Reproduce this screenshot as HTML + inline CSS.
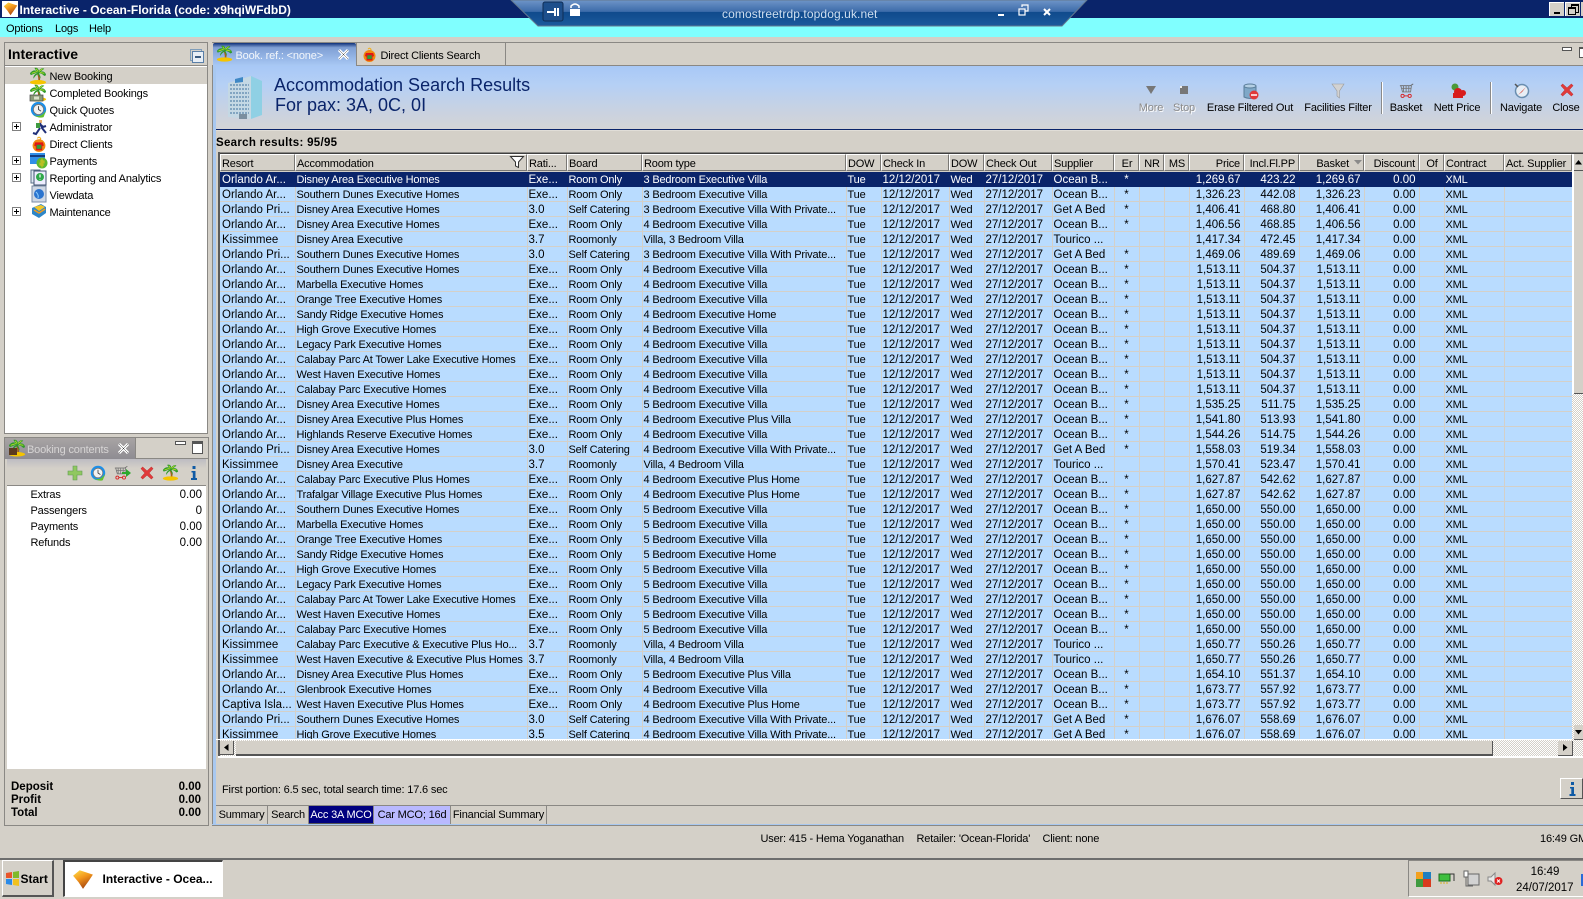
<!DOCTYPE html>
<html><head><meta charset="utf-8"><title>Interactive - Ocean-Florida</title>
<style>
html,body{margin:0;padding:0;background:#d4d0c8}
#p{position:relative;width:1583px;height:899px;overflow:hidden;background:#d4d0c8;font:11px/15px "Liberation Sans",Arial,sans-serif;letter-spacing:-.17px;color:#000}
.a{position:absolute;white-space:nowrap}
svg{position:absolute;overflow:visible}
.b{font-weight:bold;font-size:11.5px;letter-spacing:0}
.n{font-size:11.5px;letter-spacing:0}
.pn{position:absolute;border:1px solid #8a8884;box-sizing:border-box}
table{border-collapse:collapse;table-layout:fixed;position:absolute;left:220px;top:172px;width:1352px;font:11.5px/12px "Liberation Sans",Arial,sans-serif;letter-spacing:0}
td{height:12px;padding:2px 0 0 1px;border-right:1px solid #d4d0c8;border-bottom:1px solid #d4d0c8;background:#b9dcff;white-space:nowrap;overflow:hidden;box-sizing:content-box}
td:nth-child(1){padding-left:2px}
td:nth-child(2),td:nth-child(4),td:nth-child(5),td:nth-child(6),td:nth-child(8),td:nth-child(19){font-size:11px;letter-spacing:-.18px}
tr.s td{background:#0a246a;color:#fff;border-color:#0a246a;border-right-color:#0a246a}
td.r{text-align:right;padding:2px 3px 0 0}
td.c{text-align:center;padding:2px 0 0 0}
.h{position:absolute;top:154px;height:17px;box-sizing:border-box;background:#d4d0c8;border-left:1px solid #fff;border-top:1px solid #fff;border-right:1px solid #7a7874;border-bottom:1px solid #7a7874;padding-left:1px;line-height:18px;white-space:nowrap;overflow:hidden;box-shadow:1px 0 0 #d4d0c8}
.h.r{text-align:right;padding:0 3px 0 0}
.t{position:absolute;text-align:center;line-height:15px;white-space:nowrap;transform:translateX(-50%);top:100.500px}
.g{color:#8b8b8b;text-shadow:1px 1px 0 #fff}
.bt{position:absolute;top:806px;height:18px;line-height:19px;text-align:center;box-sizing:border-box;border-right:1px solid #8a8884;white-space:nowrap}
</style></head><body><div id="p">
<svg width="0" height="0" style="position:absolute"><defs>
<linearGradient id="og" x1="0" y1="0" x2=".5" y2="1"><stop offset="0" stop-color="#ffe04a"/><stop offset=".5" stop-color="#f2961c"/><stop offset="1" stop-color="#a8480f"/></linearGradient>
<symbol id="palm" viewBox="0 0 20 20"><path d="M10 7C11 10 12 13 11 16" stroke="#a0601c" stroke-width="2" fill="none"/><ellipse cx="10" cy="17" rx="9" ry="2.500" fill="#f5c400"/><path d="M10 6L2 9L1 7Q4 3 8 4L6 1Q10 0 11 4Q14 0 17 2L13 5Q18 4 19 9L17 10Q14 7 11 7Q13 10 13 13L10 8Q7 9 5 13Q4 9 10 6Z" fill="#2f9a2a"/><path d="M3 7L9 5M8 2L10 5M15 2L11 5M17 7L12 6" stroke="#b4dc28" fill="none"/></symbol>
<symbol id="sm" viewBox="0 0 20 20"><path d="M1 7L7 2L19 6L15 12L10 19L6 13Z" fill="url(#og)"/></symbol>
<symbol id="clk" viewBox="0 0 20 20"><circle cx="10" cy="10" r="9" fill="#1d8fe8"/><circle cx="10" cy="10" r="6" fill="#f2f2f2" stroke="#777"/><path d="M10 6V10L13 12" stroke="#333" fill="none"/><path d="M4 16Q12 21 19 11L16 19Q10 21 4 16Z" fill="#63c02e"/></symbol>
<symbol id="cli" viewBox="0 0 20 20"><path d="M8 3Q10 0 12 3Q12 5 10 6" stroke="#f2b01e" stroke-width="1.500" fill="none"/><circle cx="10" cy="12" r="8" fill="#f08a10"/><path d="M5 8H15L16 12L14 13V18H6V13L4 12Z" fill="#e01515"/><rect x="7" y="11" width="6" height="5" fill="#2f9a36"/></symbol>
<symbol id="x" viewBox="0 0 16 16"><path d="M3 1L8 5.500L13 1L15 3L10.500 8L15 13L13 15L8 10.500L3 15L1 13L5.500 8L1 3Z" fill="#e03a3a" stroke="#b52a2a" stroke-width=".5"/></symbol>
<symbol id="cart" viewBox="0 0 18 18"><path d="M1 3H13L16 1" stroke="#666" fill="none"/><path d="M2 3L4 10H13L14 3M5 3V10M8 3V10M11 3V10M3 6H14" stroke="#777" fill="none"/><circle cx="4" cy="14.500" r="1.800" fill="none" stroke="#d81c1c"/><circle cx="12" cy="14.500" r="1.800" fill="none" stroke="#d81c1c"/><path d="M6 14.500H10" stroke="#d81c1c"/></symbol>
</defs></svg>

<!-- title bar -->
<div class="a" style="left:0;top:0;width:1583px;height:18px;background:#0a246a"></div>
<div class="a" style="left:2px;top:1px;width:16px;height:16px;background:#fff"></div>
<svg style="left:3px;top:1px" width="15" height="15"><use href="#sm" width="15" height="15"/></svg>
<div class="a b" style="left:19.500px;top:1.500px;color:#fff;font-size:12px;line-height:16px;letter-spacing:0">Interactive - Ocean-Florida (code: x9hqiWFdbD)</div>
<div class="a" style="left:1549px;top:2px;width:15px;height:14px;background:#d4d0c8;border-top:1px solid #fff;border-left:1px solid #fff;box-sizing:border-box"><div class="a" style="left:4px;top:9px;width:6px;height:2px;background:#000"></div></div>
<div class="a" style="left:1565px;top:2px;width:15px;height:14px;background:#d4d0c8;border-top:1px solid #fff;border-left:1px solid #fff;box-sizing:border-box"><div class="a" style="left:5px;top:1px;width:6px;height:6px;border:1px solid #000;border-top-width:2px"></div><div class="a" style="left:2px;top:4px;width:6px;height:5px;border:1px solid #000;border-top-width:2px;background:#d4d0c8"></div></div>
<div class="a" style="left:1581px;top:2px;width:2px;height:14px;background:#d4d0c8"></div>

<!-- menu -->
<div class="a" style="left:0;top:18px;width:1583px;height:19px;background:#80ffff"></div>
<div class="a" style="left:6px;top:21.500px">Options</div>
<div class="a" style="left:55px;top:21.500px">Logs</div>
<div class="a" style="left:89px;top:21.500px">Help</div>

<!-- rdp bar -->
<svg style="left:0;top:0" width="1583" height="30">
<defs><linearGradient id="rd" x1="0" y1="0" x2="0" y2="1"><stop offset="0" stop-color="#6f95c8"/><stop offset=".45" stop-color="#3c6ba9"/><stop offset=".46" stop-color="#0f4a8c"/><stop offset="1" stop-color="#1c5a9c"/></linearGradient></defs>
<path d="M511 0L538 26H1062L1087 0Z" fill="url(#rd)" stroke="#62788f"/>
<rect x="543" y="2" width="20" height="19" rx="2" fill="#1d4f8c" stroke="#0f2d55"/>
<path d="M547 12H555M555 8V16M558 8V16" stroke="#fff" stroke-width="2"/>
<path d="M571 8V6Q575 2 579 6V8" fill="none" stroke="#fff" stroke-width="1.500"/><rect x="570" y="9" width="10" height="7" fill="#fff"/>
<path d="M998 15H1004" stroke="#fff" stroke-width="2"/>
<rect x="1019" y="9" width="6" height="6" fill="none" stroke="#fff" stroke-width="1.200"/><path d="M1022 7V5H1028V11H1025" fill="none" stroke="#fff" stroke-width="1.200"/>
<path d="M1044 9L1050 15M1050 9L1044 15" stroke="#fff" stroke-width="2"/>
</svg>
<div class="a" style="left:722px;top:7px;color:#cfdff0;font-size:12px;letter-spacing:.1px">comostreetrdp.topdog.uk.net</div>

<!-- left panel top -->
<div class="pn" style="left:4px;top:42px;width:204px;height:392px;background:#fff;border-top:1px solid #8a8884"></div>
<div class="a" style="left:5px;top:43px;width:202px;height:22px;background:#d4d0c8;border-bottom:1px solid #8a8884"></div>
<div class="a b" style="left:8px;top:46px;font-size:14px;line-height:17px">Interactive</div>
<div class="a" style="left:190px;top:49px;width:10px;height:10px;border:1px solid #7f9db9;background:#d4d0c8"></div>
<div class="a" style="left:192px;top:51px;width:10px;height:10px;border:1px solid #5a7fa8;background:#e8eef5"><div class="a" style="left:2px;top:4px;width:6px;height:2px;background:#3a5a80"></div></div>
<div class="a" style="left:5px;top:67px;width:202px;height:17px;background:#d4d0c8"></div>
<svg style="left:29px;top:67px" width="18" height="18"><use href="#palm" width="18" height="18"/></svg>
<div class="a" style="left:49.500px;top:70px">New Booking</div>
<svg style="left:29px;top:84px" width="18" height="18"><use href="#palm" width="18" height="18"/><rect x="1" y="11" width="13" height="6" fill="#8a9a78" stroke="#444" stroke-width=".7"/><rect x="5" y="12.500" width="5" height="3" fill="#d8e0c8"/></svg>
<div class="a" style="left:49.500px;top:87px">Completed Bookings</div>
<svg style="left:30px;top:101px" width="17" height="17"><use href="#clk" width="17" height="17"/></svg>
<div class="a" style="left:49.500px;top:104px">Quick Quotes</div>
<svg style="left:32px;top:119px" width="15" height="16"><path d="M7 1h3v3h-3z" fill="#e8b070"/><path d="M8 4L10 9L14 14M8 5L11 8L14 7M8 9L4 15L1 14" stroke="#1f2f78" stroke-width="2" fill="none"/><rect x="4" y="4" width="4" height="5" fill="#3f9a3f"/></svg>
<div class="a" style="left:49.500px;top:121px">Administrator</div>
<svg style="left:31px;top:135px" width="16" height="18"><use href="#cli" width="16" height="18"/></svg>
<div class="a" style="left:49.500px;top:138px">Direct Clients</div>
<svg style="left:30px;top:152px" width="17" height="17"><rect x="0" y="1" width="15" height="11" fill="#2f8fe8"/><rect x="0" y="3" width="15" height="2" fill="#123c80"/><circle cx="12" cy="11" r="5.500" fill="#5fb82f"/><path d="M12 6.500V15.500M10 9H14V11H10V13H14" stroke="#d8c01e" fill="none"/></svg>
<div class="a" style="left:49.500px;top:155px">Payments</div>
<svg style="left:31px;top:169px" width="16" height="17"><rect x="0" y="1" width="9" height="13" fill="#dfe9f3" stroke="#5a6f8a"/><rect x="3" y="2" width="12" height="14" fill="#eef" stroke="#3f5370"/><circle cx="9" cy="8" r="4" fill="#2fa84b"/><path d="M9 5.500V8.500M9 10V10.500" stroke="#fff" stroke-width="1.200"/></svg>
<div class="a" style="left:49.500px;top:172px">Reporting and Analytics</div>
<svg style="left:31px;top:186px" width="16" height="17"><rect x="1" y="0" width="14" height="16" fill="#cfd8e5" stroke="#7b8ba5"/><circle cx="8" cy="8" r="5" fill="#2b74cf"/><path d="M5 6Q8 9 7 12" stroke="#8fd0ff" fill="none"/></svg>
<div class="a" style="left:49.500px;top:189px">Viewdata</div>
<svg style="left:31px;top:203px" width="16" height="17"><path d="M1 5L10 1L15 4V10L8 15L1 11Z" fill="#2e86c8"/><path d="M3 4L10 2L14 4L8 8Z" fill="#f2c62a"/><path d="M3 7L8 10L14 6" stroke="#f29a1c" fill="none" stroke-width="1.500"/></svg>
<div class="a" style="left:49.500px;top:206px">Maintenance</div>
<svg style="left:12px;top:122px" width="9" height="9"><rect x=".5" y=".5" width="8" height="8" fill="#fff" stroke="#808080"/><path d="M2 4.500H7M4.500 2V7" stroke="#000"/></svg>
<svg style="left:12px;top:156px" width="9" height="9"><rect x=".5" y=".5" width="8" height="8" fill="#fff" stroke="#808080"/><path d="M2 4.500H7M4.500 2V7" stroke="#000"/></svg>
<svg style="left:12px;top:173px" width="9" height="9"><rect x=".5" y=".5" width="8" height="8" fill="#fff" stroke="#808080"/><path d="M2 4.500H7M4.500 2V7" stroke="#000"/></svg>
<svg style="left:12px;top:207px" width="9" height="9"><rect x=".5" y=".5" width="8" height="8" fill="#fff" stroke="#808080"/><path d="M2 4.500H7M4.500 2V7" stroke="#000"/></svg>

<!-- left panel bottom -->
<div class="pn" style="left:4px;top:437px;width:205px;height:389px;background:#d4d0c8"></div>
<div class="a" style="left:5px;top:438px;width:130px;height:21px;background:linear-gradient(#a8a4a4,#8e8c92);border-right:1px solid #8a8884"></div>
<div class="a" style="left:135px;top:458px;width:73px;height:1px;background:#8a8884"></div>
<svg style="left:8px;top:439px" width="18" height="18"><use href="#palm" width="18" height="18"/><rect x="1" y="9" width="8" height="7" fill="#5b3a1f"/></svg>
<div class="a" style="left:27px;top:443px;color:#d6d4d4">Booking contents</div>
<svg style="left:118px;top:443px" width="11" height="11"><path d="M1 1L10 10M10 1L1 10" stroke="#fff" stroke-width="3"/><path d="M1 1L10 10M10 1L1 10" stroke="#333" stroke-width=".5"/></svg>
<div class="a" style="left:175px;top:441px;width:9px;height:2px;border:1px solid #555;background:#fff"></div>
<div class="a" style="left:192px;top:441px;width:9px;height:9px;border:1px solid #555;border-top-width:3px;background:#fff"></div>
<div class="a" style="left:7px;top:459px;width:199px;height:26px;background:linear-gradient(#bdbcc2,#d4d0c8 35%);border-bottom:1px solid #8a8884"></div>
<svg style="left:68px;top:466px" width="14" height="14"><path d="M5 0H9V5H14V9H9V14H5V9H0V5H5Z" fill="#90c860" stroke="#5f9a55" stroke-width=".6"/></svg>
<svg style="left:90px;top:465px" width="16" height="16"><use href="#clk" width="16" height="16"/></svg>
<svg style="left:114px;top:465px" width="17" height="16"><use href="#cart" width="15" height="16"/><path d="M8 7H12V4L17 8L12 12V9H8Z" fill="#2ca82c"/></svg>
<svg style="left:140px;top:466px" width="14" height="14"><use href="#x" width="14" height="14"/></svg>
<svg style="left:162px;top:464px" width="17" height="17"><use href="#palm" width="17" height="17"/></svg>
<svg style="left:190px;top:466px" width="8" height="14"><rect x="2.500" y="0" width="3" height="3" fill="#0f5aa5"/><path d="M1.500 5H5.500V12H7V14H1V12H2.800V6.500H1.500Z" fill="#0f5aa5"/></svg>
<div class="a" style="left:7px;top:486px;width:199px;height:283px;background:#fff"></div>
<div class="a" style="left:30.500px;top:488px">Extras</div><div class="a n" style="right:1381px;top:488px">0.00</div>
<div class="a" style="left:30.500px;top:504px">Passengers</div><div class="a n" style="right:1381px;top:504px">0</div>
<div class="a" style="left:30.500px;top:520px">Payments</div><div class="a n" style="right:1381px;top:520px">0.00</div>
<div class="a" style="left:30.500px;top:536px">Refunds</div><div class="a n" style="right:1381px;top:536px">0.00</div>
<div class="a b" style="left:11px;top:780px">Deposit</div><div class="a b" style="right:1382px;top:780px">0.00</div>
<div class="a b" style="left:11px;top:793px">Profit</div><div class="a b" style="right:1382px;top:793px">0.00</div>
<div class="a b" style="left:11px;top:806px">Total</div><div class="a b" style="right:1382px;top:806px">0.00</div>

<!-- right panel -->
<div class="a" style="left:212px;top:42px;width:1371px;height:1px;background:#8a8884"></div>
<div class="a" style="left:212px;top:65px;width:1371px;height:1px;background:#8a8884"></div>
<div class="a" style="left:213px;top:43px;width:143px;height:23px;background:linear-gradient(#0e2f78,#7f9fd4 20%,#a9c9f5);border-radius:2px 2px 0 0"></div>
<svg style="left:216px;top:45px" width="17" height="17"><use href="#palm" width="17" height="17"/></svg>
<div class="a" style="left:235.500px;top:48.500px;color:#f2f6fb">Book. ref.: &lt;none&gt;</div>
<svg style="left:338px;top:49px" width="11" height="11"><path d="M1 1L10 10M10 1L1 10" stroke="#fff" stroke-width="3"/><path d="M1 1L10 10M10 1L1 10" stroke="#444" stroke-width=".5"/></svg>
<div class="a" style="left:505px;top:43px;width:1px;height:22px;background:#8a8884"></div>
<div class="a" style="left:356px;top:43px;width:1px;height:22px;background:#8a8884"></div>
<svg style="left:362px;top:46px" width="15" height="17"><use href="#cli" width="15" height="17"/></svg>
<div class="a" style="left:380.500px;top:48.500px">Direct Clients Search</div>
<div class="a" style="left:1562px;top:47px;width:8px;height:2px;border:1px solid #555;background:#fff"></div>
<div class="a" style="left:1579px;top:47px;width:8px;height:8px;border:1px solid #555;border-top-width:2px;background:#fff"></div>
<div class="a" style="left:213px;top:66px;width:1370px;height:63px;background:linear-gradient(#a8c8f6,#b5d0f5 30%,#c8d2e2 70%,#d4d4d6)"></div>
<div class="a" style="left:213px;top:129px;width:1370px;height:1px;background:#0a246a"></div>
<div class="a" style="left:212px;top:66px;width:4px;height:758px;background:#a8c8f0;border-left:1px solid #8a8884;box-sizing:border-box"></div>
<div class="a" style="left:216px;top:130px;width:1367px;height:1px;background:#fff;opacity:.3"></div>

<svg style="left:227px;top:73px" width="36" height="48"><path d="M1 10L24 3V46L1 44Z" fill="#c4d8e4"/><path d="M24 3L35 8V42L24 46Z" fill="#8fd0e4"/><path d="M3 12H22M3 16H22M3 20H22M3 24H22M3 28H22M3 32H22M3 36H22M3 40H22" stroke="#6d94b5" stroke-width="1.500" stroke-dasharray="2 1"/><path d="M8 6L16 4V9L8 10Z" fill="#3f88c5"/><rect x="12" y="41" width="8" height="5" fill="#7a8fa0"/></svg>
<div class="a" style="left:274px;top:75px;font-size:18px;line-height:21px;color:#0a246a;letter-spacing:0">Accommodation Search Results</div>
<div class="a" style="left:275px;top:95px;font-size:18px;line-height:21px;color:#0a246a;letter-spacing:0">For pax: 3A, 0C, 0I</div>

<svg style="left:1145px;top:85px" width="12" height="10"><path d="M1 1H11L6 9Z" fill="#777"/></svg>
<svg style="left:1180px;top:86px" width="9" height="9"><rect width="8" height="8" fill="#777"/><rect width="2" height="2" fill="#eee"/></svg>
<svg style="left:1243px;top:83px" width="17" height="17"><path d="M1 3V14Q7 17 13 14V3Z" fill="#7fa8c8" stroke="#5a7d9a"/><ellipse cx="7" cy="3" rx="6" ry="2" fill="#b4cfe4" stroke="#5a7d9a"/><circle cx="11" cy="12" r="4.500" fill="#e03a3a"/><path d="M8 12H14" stroke="#fff" stroke-width="1.500"/></svg>
<svg style="left:1332px;top:83px" width="12" height="16"><path d="M0 1H12L7.500 8V15L5 13V8Z" fill="#d2d2d2" stroke="#9a9a9a" stroke-width=".6"/></svg>
<svg style="left:1399px;top:82px" width="16" height="18"><use href="#cart" width="16" height="18"/></svg>
<svg style="left:1450px;top:83px" width="16" height="16"><circle cx="5" cy="4" r="3.500" fill="#4c9a3a"/><circle cx="8" cy="9" r="4" fill="#d81c1c"/><circle cx="13" cy="10" r="3" fill="#d81c1c"/><rect x="3" y="10" width="10" height="5" fill="#d81c1c"/></svg>
<svg style="left:1514px;top:83px" width="16" height="16"><circle cx="8" cy="8" r="6.500" fill="#e8eef5" stroke="#6a8eb0" stroke-width="1.500"/><path d="M4 12L9 7L12 4L8 9Z" fill="#d43a2a"/><path d="M1 1L4 4" stroke="#555" stroke-width="1.500"/></svg>
<svg style="left:1560px;top:83px" width="14" height="14"><use href="#x" width="14" height="14"/></svg>

<div class="t g" style="left:1151px">More</div>
<div class="t g" style="left:1184px">Stop</div>
<div class="t" style="left:1250px">Erase Filtered Out</div>
<div class="t" style="left:1338px">Facilities Filter</div>
<div class="t" style="left:1406px">Basket</div>
<div class="t" style="left:1457px">Nett Price</div>
<div class="t" style="left:1521px">Navigate</div>
<div class="t" style="left:1566px">Close</div>
<div class="a" style="left:1381px;top:82px;width:1px;height:32px;background:#8a8a8a;border-right:1px solid #fff"></div>
<div class="a" style="left:1490px;top:82px;width:1px;height:32px;background:#8a8a8a;border-right:1px solid #fff"></div>

<div class="a b" style="left:216px;top:135.500px;letter-spacing:.3px">Search results: 95/95</div>

<!-- table frame -->
<div class="a" style="left:218px;top:152px;width:1365px;height:1px;background:#8a8884"></div>
<div class="a" style="left:218px;top:153px;width:1365px;height:1px;background:#404040"></div>
<div class="a" style="left:218px;top:152px;width:2px;height:604px;background:#5a5a5a"></div>
<div class="a" style="left:218px;top:756px;width:1365px;height:1.500px;background:#fff"></div>

<div class="h" style="left:220px;width:75px">Resort</div>
<div class="h" style="left:295px;width:232px">Accommodation<svg style="left:214px;top:1px" width="14" height="12"><path d="M.5 .5H13.500L8.500 6V11.500L5.500 10V6Z" fill="#fff" stroke="#333"/></svg></div>
<div class="h" style="left:527px;width:40px">Rati...</div>
<div class="h" style="left:567px;width:75px">Board</div>
<div class="h" style="left:642px;width:204px">Room type</div>
<div class="h" style="left:846px;width:35px">DOW</div>
<div class="h" style="left:881px;width:68px">Check In</div>
<div class="h" style="left:949px;width:35px">DOW</div>
<div class="h" style="left:984px;width:68px">Check Out</div>
<div class="h" style="left:1052px;width:62px">Supplier</div>
<div class="h" style="left:1114px;width:25px;text-align:center">Er</div>
<div class="h" style="left:1139px;width:25px;text-align:center">NR</div>
<div class="h" style="left:1164px;width:25px;text-align:center">MS</div>
<div class="h r" style="left:1189px;width:55px">Price</div>
<div class="h r" style="left:1244px;width:55px">Incl.Fl.PP</div>
<div class="h r" style="left:1299px;width:65px;padding-right:14px">Basket<svg style="left:54px;top:5px" width="9" height="5"><path d="M0 0H8L4 4.500Z" fill="#8a8a8a"/></svg></div>
<div class="h r" style="left:1364px;width:55px">Discount</div>
<div class="h" style="left:1419px;width:25px;text-align:center">Of</div>
<div class="h" style="left:1444px;width:60px">Contract</div>
<div class="h" style="left:1504px;width:68px">Act. Supplier</div>

<table>
<colgroup><col style="width:75px"><col style="width:232px"><col style="width:40px"><col style="width:75px"><col style="width:204px"><col style="width:35px"><col style="width:68px"><col style="width:35px"><col style="width:68px"><col style="width:62px"><col style="width:25px"><col style="width:25px"><col style="width:25px"><col style="width:55px"><col style="width:55px"><col style="width:65px"><col style="width:55px"><col style="width:25px"><col style="width:60px"><col style="width:68px"></colgroup>
<tr class="s"><td>Orlando Ar...<td>Disney Area Executive Homes<td>Exe...<td>Room Only<td>3 Bedroom Executive Villa<td>Tue<td>12/12/2017<td>Wed<td>27/12/2017<td>Ocean B...<td class="c">*<td><td><td class="r">1,269.67<td class="r">423.22<td class="r">1,269.67<td class="r">0.00<td><td>XML<td>
<tr><td>Orlando Ar...<td>Southern Dunes Executive Homes<td>Exe...<td>Room Only<td>3 Bedroom Executive Villa<td>Tue<td>12/12/2017<td>Wed<td>27/12/2017<td>Ocean B...<td class="c">*<td><td><td class="r">1,326.23<td class="r">442.08<td class="r">1,326.23<td class="r">0.00<td><td>XML<td>
<tr><td>Orlando Pri...<td>Disney Area Executive Homes<td>3.0<td>Self Catering<td>3 Bedroom Executive Villa With Private...<td>Tue<td>12/12/2017<td>Wed<td>27/12/2017<td>Get A Bed<td class="c">*<td><td><td class="r">1,406.41<td class="r">468.80<td class="r">1,406.41<td class="r">0.00<td><td>XML<td>
<tr><td>Orlando Ar...<td>Disney Area Executive Homes<td>Exe...<td>Room Only<td>4 Bedroom Executive Villa<td>Tue<td>12/12/2017<td>Wed<td>27/12/2017<td>Ocean B...<td class="c">*<td><td><td class="r">1,406.56<td class="r">468.85<td class="r">1,406.56<td class="r">0.00<td><td>XML<td>
<tr><td>Kissimmee<td>Disney Area Executive<td>3.7<td>Roomonly<td>Villa, 3 Bedroom Villa<td>Tue<td>12/12/2017<td>Wed<td>27/12/2017<td>Tourico ...<td class="c"><td><td><td class="r">1,417.34<td class="r">472.45<td class="r">1,417.34<td class="r">0.00<td><td>XML<td>
<tr><td>Orlando Pri...<td>Southern Dunes Executive Homes<td>3.0<td>Self Catering<td>3 Bedroom Executive Villa With Private...<td>Tue<td>12/12/2017<td>Wed<td>27/12/2017<td>Get A Bed<td class="c">*<td><td><td class="r">1,469.06<td class="r">489.69<td class="r">1,469.06<td class="r">0.00<td><td>XML<td>
<tr><td>Orlando Ar...<td>Southern Dunes Executive Homes<td>Exe...<td>Room Only<td>4 Bedroom Executive Villa<td>Tue<td>12/12/2017<td>Wed<td>27/12/2017<td>Ocean B...<td class="c">*<td><td><td class="r">1,513.11<td class="r">504.37<td class="r">1,513.11<td class="r">0.00<td><td>XML<td>
<tr><td>Orlando Ar...<td>Marbella Executive Homes<td>Exe...<td>Room Only<td>4 Bedroom Executive Villa<td>Tue<td>12/12/2017<td>Wed<td>27/12/2017<td>Ocean B...<td class="c">*<td><td><td class="r">1,513.11<td class="r">504.37<td class="r">1,513.11<td class="r">0.00<td><td>XML<td>
<tr><td>Orlando Ar...<td>Orange Tree Executive Homes<td>Exe...<td>Room Only<td>4 Bedroom Executive Villa<td>Tue<td>12/12/2017<td>Wed<td>27/12/2017<td>Ocean B...<td class="c">*<td><td><td class="r">1,513.11<td class="r">504.37<td class="r">1,513.11<td class="r">0.00<td><td>XML<td>
<tr><td>Orlando Ar...<td>Sandy Ridge Executive Homes<td>Exe...<td>Room Only<td>4 Bedroom Executive Home<td>Tue<td>12/12/2017<td>Wed<td>27/12/2017<td>Ocean B...<td class="c">*<td><td><td class="r">1,513.11<td class="r">504.37<td class="r">1,513.11<td class="r">0.00<td><td>XML<td>
<tr><td>Orlando Ar...<td>High Grove Executive Homes<td>Exe...<td>Room Only<td>4 Bedroom Executive Villa<td>Tue<td>12/12/2017<td>Wed<td>27/12/2017<td>Ocean B...<td class="c">*<td><td><td class="r">1,513.11<td class="r">504.37<td class="r">1,513.11<td class="r">0.00<td><td>XML<td>
<tr><td>Orlando Ar...<td>Legacy Park Executive Homes<td>Exe...<td>Room Only<td>4 Bedroom Executive Villa<td>Tue<td>12/12/2017<td>Wed<td>27/12/2017<td>Ocean B...<td class="c">*<td><td><td class="r">1,513.11<td class="r">504.37<td class="r">1,513.11<td class="r">0.00<td><td>XML<td>
<tr><td>Orlando Ar...<td>Calabay Parc At Tower Lake Executive Homes<td>Exe...<td>Room Only<td>4 Bedroom Executive Villa<td>Tue<td>12/12/2017<td>Wed<td>27/12/2017<td>Ocean B...<td class="c">*<td><td><td class="r">1,513.11<td class="r">504.37<td class="r">1,513.11<td class="r">0.00<td><td>XML<td>
<tr><td>Orlando Ar...<td>West Haven Executive Homes<td>Exe...<td>Room Only<td>4 Bedroom Executive Villa<td>Tue<td>12/12/2017<td>Wed<td>27/12/2017<td>Ocean B...<td class="c">*<td><td><td class="r">1,513.11<td class="r">504.37<td class="r">1,513.11<td class="r">0.00<td><td>XML<td>
<tr><td>Orlando Ar...<td>Calabay Parc Executive Homes<td>Exe...<td>Room Only<td>4 Bedroom Executive Villa<td>Tue<td>12/12/2017<td>Wed<td>27/12/2017<td>Ocean B...<td class="c">*<td><td><td class="r">1,513.11<td class="r">504.37<td class="r">1,513.11<td class="r">0.00<td><td>XML<td>
<tr><td>Orlando Ar...<td>Disney Area Executive Homes<td>Exe...<td>Room Only<td>5 Bedroom Executive Villa<td>Tue<td>12/12/2017<td>Wed<td>27/12/2017<td>Ocean B...<td class="c">*<td><td><td class="r">1,535.25<td class="r">511.75<td class="r">1,535.25<td class="r">0.00<td><td>XML<td>
<tr><td>Orlando Ar...<td>Disney Area Executive Plus Homes<td>Exe...<td>Room Only<td>4 Bedroom Executive Plus Villa<td>Tue<td>12/12/2017<td>Wed<td>27/12/2017<td>Ocean B...<td class="c">*<td><td><td class="r">1,541.80<td class="r">513.93<td class="r">1,541.80<td class="r">0.00<td><td>XML<td>
<tr><td>Orlando Ar...<td>Highlands Reserve Executive Homes<td>Exe...<td>Room Only<td>4 Bedroom Executive Villa<td>Tue<td>12/12/2017<td>Wed<td>27/12/2017<td>Ocean B...<td class="c">*<td><td><td class="r">1,544.26<td class="r">514.75<td class="r">1,544.26<td class="r">0.00<td><td>XML<td>
<tr><td>Orlando Pri...<td>Disney Area Executive Homes<td>3.0<td>Self Catering<td>4 Bedroom Executive Villa With Private...<td>Tue<td>12/12/2017<td>Wed<td>27/12/2017<td>Get A Bed<td class="c">*<td><td><td class="r">1,558.03<td class="r">519.34<td class="r">1,558.03<td class="r">0.00<td><td>XML<td>
<tr><td>Kissimmee<td>Disney Area Executive<td>3.7<td>Roomonly<td>Villa, 4 Bedroom Villa<td>Tue<td>12/12/2017<td>Wed<td>27/12/2017<td>Tourico ...<td class="c"><td><td><td class="r">1,570.41<td class="r">523.47<td class="r">1,570.41<td class="r">0.00<td><td>XML<td>
<tr><td>Orlando Ar...<td>Calabay Parc Executive Plus Homes<td>Exe...<td>Room Only<td>4 Bedroom Executive Plus Home<td>Tue<td>12/12/2017<td>Wed<td>27/12/2017<td>Ocean B...<td class="c">*<td><td><td class="r">1,627.87<td class="r">542.62<td class="r">1,627.87<td class="r">0.00<td><td>XML<td>
<tr><td>Orlando Ar...<td>Trafalgar Village Executive Plus Homes<td>Exe...<td>Room Only<td>4 Bedroom Executive Plus Home<td>Tue<td>12/12/2017<td>Wed<td>27/12/2017<td>Ocean B...<td class="c">*<td><td><td class="r">1,627.87<td class="r">542.62<td class="r">1,627.87<td class="r">0.00<td><td>XML<td>
<tr><td>Orlando Ar...<td>Southern Dunes Executive Homes<td>Exe...<td>Room Only<td>5 Bedroom Executive Villa<td>Tue<td>12/12/2017<td>Wed<td>27/12/2017<td>Ocean B...<td class="c">*<td><td><td class="r">1,650.00<td class="r">550.00<td class="r">1,650.00<td class="r">0.00<td><td>XML<td>
<tr><td>Orlando Ar...<td>Marbella Executive Homes<td>Exe...<td>Room Only<td>5 Bedroom Executive Villa<td>Tue<td>12/12/2017<td>Wed<td>27/12/2017<td>Ocean B...<td class="c">*<td><td><td class="r">1,650.00<td class="r">550.00<td class="r">1,650.00<td class="r">0.00<td><td>XML<td>
<tr><td>Orlando Ar...<td>Orange Tree Executive Homes<td>Exe...<td>Room Only<td>5 Bedroom Executive Villa<td>Tue<td>12/12/2017<td>Wed<td>27/12/2017<td>Ocean B...<td class="c">*<td><td><td class="r">1,650.00<td class="r">550.00<td class="r">1,650.00<td class="r">0.00<td><td>XML<td>
<tr><td>Orlando Ar...<td>Sandy Ridge Executive Homes<td>Exe...<td>Room Only<td>5 Bedroom Executive Home<td>Tue<td>12/12/2017<td>Wed<td>27/12/2017<td>Ocean B...<td class="c">*<td><td><td class="r">1,650.00<td class="r">550.00<td class="r">1,650.00<td class="r">0.00<td><td>XML<td>
<tr><td>Orlando Ar...<td>High Grove Executive Homes<td>Exe...<td>Room Only<td>5 Bedroom Executive Villa<td>Tue<td>12/12/2017<td>Wed<td>27/12/2017<td>Ocean B...<td class="c">*<td><td><td class="r">1,650.00<td class="r">550.00<td class="r">1,650.00<td class="r">0.00<td><td>XML<td>
<tr><td>Orlando Ar...<td>Legacy Park Executive Homes<td>Exe...<td>Room Only<td>5 Bedroom Executive Villa<td>Tue<td>12/12/2017<td>Wed<td>27/12/2017<td>Ocean B...<td class="c">*<td><td><td class="r">1,650.00<td class="r">550.00<td class="r">1,650.00<td class="r">0.00<td><td>XML<td>
<tr><td>Orlando Ar...<td>Calabay Parc At Tower Lake Executive Homes<td>Exe...<td>Room Only<td>5 Bedroom Executive Villa<td>Tue<td>12/12/2017<td>Wed<td>27/12/2017<td>Ocean B...<td class="c">*<td><td><td class="r">1,650.00<td class="r">550.00<td class="r">1,650.00<td class="r">0.00<td><td>XML<td>
<tr><td>Orlando Ar...<td>West Haven Executive Homes<td>Exe...<td>Room Only<td>5 Bedroom Executive Villa<td>Tue<td>12/12/2017<td>Wed<td>27/12/2017<td>Ocean B...<td class="c">*<td><td><td class="r">1,650.00<td class="r">550.00<td class="r">1,650.00<td class="r">0.00<td><td>XML<td>
<tr><td>Orlando Ar...<td>Calabay Parc Executive Homes<td>Exe...<td>Room Only<td>5 Bedroom Executive Villa<td>Tue<td>12/12/2017<td>Wed<td>27/12/2017<td>Ocean B...<td class="c">*<td><td><td class="r">1,650.00<td class="r">550.00<td class="r">1,650.00<td class="r">0.00<td><td>XML<td>
<tr><td>Kissimmee<td>Calabay Parc Executive &amp; Executive Plus Ho...<td>3.7<td>Roomonly<td>Villa, 4 Bedroom Villa<td>Tue<td>12/12/2017<td>Wed<td>27/12/2017<td>Tourico ...<td class="c"><td><td><td class="r">1,650.77<td class="r">550.26<td class="r">1,650.77<td class="r">0.00<td><td>XML<td>
<tr><td>Kissimmee<td>West Haven Executive &amp; Executive Plus Homes<td>3.7<td>Roomonly<td>Villa, 4 Bedroom Villa<td>Tue<td>12/12/2017<td>Wed<td>27/12/2017<td>Tourico ...<td class="c"><td><td><td class="r">1,650.77<td class="r">550.26<td class="r">1,650.77<td class="r">0.00<td><td>XML<td>
<tr><td>Orlando Ar...<td>Disney Area Executive Plus Homes<td>Exe...<td>Room Only<td>5 Bedroom Executive Plus Villa<td>Tue<td>12/12/2017<td>Wed<td>27/12/2017<td>Ocean B...<td class="c">*<td><td><td class="r">1,654.10<td class="r">551.37<td class="r">1,654.10<td class="r">0.00<td><td>XML<td>
<tr><td>Orlando Ar...<td>Glenbrook Executive Homes<td>Exe...<td>Room Only<td>4 Bedroom Executive Villa<td>Tue<td>12/12/2017<td>Wed<td>27/12/2017<td>Ocean B...<td class="c">*<td><td><td class="r">1,673.77<td class="r">557.92<td class="r">1,673.77<td class="r">0.00<td><td>XML<td>
<tr><td>Captiva Isla...<td>West Haven Executive Plus Homes<td>Exe...<td>Room Only<td>4 Bedroom Executive Plus Home<td>Tue<td>12/12/2017<td>Wed<td>27/12/2017<td>Ocean B...<td class="c">*<td><td><td class="r">1,673.77<td class="r">557.92<td class="r">1,673.77<td class="r">0.00<td><td>XML<td>
<tr><td>Orlando Pri...<td>Southern Dunes Executive Homes<td>3.0<td>Self Catering<td>4 Bedroom Executive Villa With Private...<td>Tue<td>12/12/2017<td>Wed<td>27/12/2017<td>Get A Bed<td class="c">*<td><td><td class="r">1,676.07<td class="r">558.69<td class="r">1,676.07<td class="r">0.00<td><td>XML<td>
<tr><td>Kissimmee<td>High Grove Executive Homes<td>3.5<td>Self Catering<td>4 Bedroom Executive Villa With Private...<td>Tue<td>12/12/2017<td>Wed<td>27/12/2017<td>Get A Bed<td class="c">*<td><td><td class="r">1,676.07<td class="r">558.69<td class="r">1,676.07<td class="r">0.00<td><td>XML<td>
</table>
<!-- cover below table -->
<div class="a" style="left:216px;top:739px;width:1367px;height:1px;background:#fff"></div>
<div class="a" style="left:216px;top:757.500px;width:1367px;height:67px;background:#d4d0c8"></div>
<div class="a" style="left:220px;top:740px;width:1363px;height:16px;background:#d4d0c8"></div>

<!-- vscroll -->
<div class="a" style="left:1572px;top:154px;width:11px;height:602px;background:repeating-conic-gradient(#d4d0c8 0 25%,#fff 0 50%) 0 0/2px 2px"></div>
<div class="a" style="left:1574px;top:154px;width:9px;height:16px;background:#d4d0c8;border-bottom:1px solid #555"><svg style="left:1px;top:6px" width="8" height="5"><path d="M0 4.500H7L3.500 0Z" fill="#000"/></svg></div>
<div class="a" style="left:1574px;top:171px;width:9px;height:222px;background:#d4d0c8;border-bottom:1px solid #555"></div>
<div class="a" style="left:1572px;top:154px;width:2px;height:240px;background:#fff"></div>
<div class="a" style="left:1574px;top:725px;width:9px;height:14px;background:#d4d0c8;border-bottom:1px solid #555"><svg style="left:1px;top:5px" width="8" height="5"><path d="M0 0H7L3.500 4.500Z" fill="#000"/></svg></div>
<!-- hscroll -->
<div class="a" style="left:220px;top:740px;width:1353px;height:16px;background:repeating-conic-gradient(#d4d0c8 0 25%,#fff 0 50%) 0 0/2px 2px"></div>
<div class="a" style="left:220px;top:741px;width:14px;height:14px;background:#d4d0c8;border-right:1px solid #555;border-bottom:1px solid #555;box-sizing:border-box"><svg style="left:4px;top:3px" width="5" height="8"><path d="M4.500 0V7L0 3.500Z" fill="#000"/></svg></div>
<div class="a" style="left:236px;top:741px;width:1257px;height:15px;background:#d4d0c8;border-right:1px solid #555;border-bottom:2px solid #555;box-sizing:border-box"></div>
<div class="a" style="left:1558px;top:741px;width:15px;height:15px;background:#d4d0c8;border-right:1px solid #555;border-bottom:1px solid #555;box-sizing:border-box"><svg style="left:5px;top:3px" width="5" height="8"><path d="M0 0V7L4.500 3.500Z" fill="#000"/></svg></div>

<div class="a" style="left:222px;top:783px">First portion: 6.5 sec, total search time: 17.6 sec</div>
<div class="a" style="left:1560px;top:778px;width:23px;height:21px;background:#d4d0c8;border:1px solid #fff;border-right-color:#555;border-bottom-color:#555;box-sizing:border-box"><svg style="left:8px;top:3px" width="7" height="14"><rect x="2" y="0" width="3" height="3" fill="#0f5aa5"/><path d="M1 5H5V12H6.500V14H.5V12H2.300V6.500H1Z" fill="#0f5aa5"/></svg></div>

<!-- bottom tabs -->
<div class="a" style="left:216px;top:805px;width:1367px;height:1px;background:#8a8884"></div>
<div class="bt" style="left:216px;width:52px">Summary</div>
<div class="bt" style="left:268px;width:41px">Search</div>
<div class="bt" style="left:309px;width:65px;background:#00007f;color:#fff;border-bottom:1px solid #555">Acc 3A MCO</div>
<div class="bt" style="left:374px;width:77px;background:#b9b9ff">Car MCO; 16d</div>
<div class="bt" style="left:451px;width:96px">Financial Summary</div>
<div class="a" style="left:212px;top:824px;width:1371px;height:1px;background:#a8c8f0"></div>
<div class="a" style="left:212px;top:825px;width:1371px;height:1px;background:#8a8884"></div>

<!-- status -->
<div class="a" style="left:760.500px;top:832px">User: 415 - Hema Yoganathan</div>
<div class="a" style="left:916.500px;top:832px">Retailer: 'Ocean-Florida'</div>
<div class="a" style="left:1042.500px;top:832px">Client: none</div>
<div class="a" style="left:1540px;top:832px">16:49 GMT</div>

<!-- taskbar -->
<div class="a" style="left:0;top:858px;width:1583px;height:2px;background:#6e6e6e"></div>
<div class="a" style="left:0;top:860px;width:1583px;height:39px;background:#d4d0c8"></div>
<div class="a" style="left:2px;top:860px;width:52px;height:37px;border:1px solid #fff;border-right:2px solid #555;border-bottom:2px solid #555;box-sizing:border-box"></div>
<svg style="left:5px;top:871px" width="15" height="15"><path d="M1 2L7 1V7H1Z" fill="#e8552a"/><path d="M8 1L14 0V7H8Z" fill="#7fba2a"/><path d="M1 8H7V14L1 13Z" fill="#2a8ae8"/><path d="M8 8H14V15L8 14Z" fill="#f2c11e"/></svg>
<div class="a b" style="left:20.500px;top:872px;font-size:12px">Start</div>
<div class="a" style="left:63px;top:860px;width:160px;height:37px;background:#fff;border:2px solid #444;border-right:1px solid #fff;border-bottom:1px solid #fff;box-sizing:border-box"></div>
<svg style="left:68px;top:868px" width="30" height="22"><use href="#sm" width="30" height="22"/></svg>
<div class="a b" style="left:102.500px;top:872px;font-size:12px;letter-spacing:0">Interactive - Ocea...</div>
<div class="a" style="left:1408px;top:860px;width:175px;height:37px;border-left:1px solid #8a8884;border-top:1px solid #8a8884;border-bottom:1px solid #fff;box-sizing:border-box"></div>
<svg style="left:1415px;top:871px" width="16" height="16"><path d="M1 1H8V8H1Z" fill="#f2a01e"/><path d="M8 1H16V8H8Z" fill="#1f7fc0"/><path d="M1 8H8V16H1Z" fill="#3f9a3f"/><path d="M8 8H16V16H8Z" fill="#d83a1e"/></svg>
<svg style="left:1439px;top:873px" width="16" height="12"><rect x="0" y="1" width="11" height="7" fill="#3fbf3f" stroke="#1e6a1e"/><path d="M11 1H15V8" stroke="#333" fill="none"/><path d="M2 9V11M5 9V11M8 9V11" stroke="#d8b01e"/></svg>
<svg style="left:1463px;top:871px" width="17" height="16"><rect x="5" y="3" width="11" height="11" fill="#d2d2d2" stroke="#666"/><rect x="1" y="0" width="4" height="6" fill="#fff" stroke="#666"/><path d="M3 6V15H10" stroke="#666" fill="none"/></svg>
<svg style="left:1487px;top:872px" width="17" height="15"><path d="M1 5H4L8 1V13L4 9H1Z" fill="#e8e8e8" stroke="#888"/><circle cx="11.500" cy="9" r="4" fill="#e02020"/><path d="M10 7.500L13 10.500M13 7.500L10 10.500" stroke="#fff"/></svg>
<div class="a n" style="left:1530px;top:865px;width:30px;text-align:center">16:49</div>
<div class="a n" style="left:1516px;top:881px;width:57px;text-align:center">24/07/2017</div>
<div class="a" style="left:1581px;top:874px;width:2px;height:12px;background:#2a6ad8"></div>
</div></body></html>
